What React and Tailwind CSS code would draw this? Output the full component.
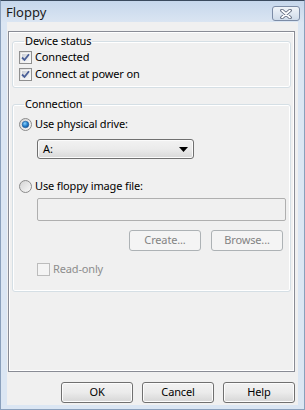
import React from "react";

const font = { fontFamily: '"Noto Sans", "Open Sans", sans-serif' };

function CheckBox({ checked, disabled }) {
  return (
    <span
      className={`relative inline-block w-[13px] h-[13px] shrink-0 border ${
        disabled ? "border-[#bcbcbc] bg-[#f4f4f4]" : "border-[#8f8f8f] bg-gradient-to-br from-[#dcdcdc] to-[#fbfbfb]"
      }`}
    >
      {!disabled && (
        <span className="absolute inset-[1px] border border-[#f4f4f4] bg-gradient-to-br from-[#cbcfd5] to-[#f6f6f6]" />
      )}
      {checked && (
        <svg className="absolute left-[1px] top-[1px]" width="9" height="9" viewBox="0 0 9 9">
          <path d="M1 4.5 L3.5 7 L8 1.2" fill="none" stroke="#4a5f97" strokeWidth="1.8" />
        </svg>
      )}
    </span>
  );
}

function Radio({ checked }) {
  return (
    <svg width="13" height="13" viewBox="0 0 13 13" className="shrink-0">
      <defs>
        <linearGradient id={checked ? "rg1" : "rg0"} x1="0" y1="0" x2="1" y2="1">
          <stop offset="0" stopColor="#d2d2d2" />
          <stop offset="1" stopColor="#fafafa" />
        </linearGradient>
        <radialGradient id="dot" cx="0.4" cy="0.35" r="0.7">
          <stop offset="0" stopColor="#8ad2ff" />
          <stop offset="0.6" stopColor="#1f7bc8" />
          <stop offset="1" stopColor="#1a4f8e" />
        </radialGradient>
      </defs>
      <circle cx="6.5" cy="6.5" r="6" fill={`url(#${checked ? "rg1" : "rg0"})`} stroke="#8b8b8b" strokeWidth="1" />
      {checked && <circle cx="6.5" cy="6.5" r="3.3" fill="url(#dot)" stroke="#1e5a9a" strokeWidth="0.6" />}
    </svg>
  );
}

function Btn({ children, disabled, w = "w-[72px]", h = "h-[21px]" }) {
  return (
    <div
      className={`${w} ${h} rounded-[3px] border flex items-center justify-center ${
        disabled
          ? "border-[#adb2b5] bg-[#f4f4f4] text-[#838383]"
          : "border-[#707070] bg-gradient-to-b from-[#f2f2f2] via-[#ebebeb] to-[#d6d6d6] text-black shadow-[inset_0_0_0_1px_#fcfcfc]"
      }`}
    >
      {children}
    </div>
  );
}

export default function App() {
  return (
    <div
      style={font}
      className="w-[305px] h-[410px] flex flex-col bg-[#dbe6f3] border-t border-t-[#3a4a5e] border-x border-x-[#8aa0bc] border-b border-b-[#8aa0bc] text-[11px] tracking-[-0.15px] text-black select-none"
    >
      {/* Title bar */}
      <div className="h-[21px] shrink-0 flex items-center justify-between pl-[5px] pr-[4px] bg-gradient-to-b from-[#c6d7ec] to-[#dae5f2]">
        <span className="text-[13px] tracking-normal text-[#1b1b1b] leading-none mt-[2px]">Floppy</span>
        <div className="w-[28px] h-[15px] mt-[4px] rounded-[3px] border border-[#7c8ca6] bg-gradient-to-b from-[#f0f4f9] to-[#cfdbe9] flex items-center justify-center">
          <svg width="14" height="10" viewBox="0 0 14 10">
            <path d="M3 1.5 L11 8.5 M11 1.5 L3 8.5" stroke="#5a6478" strokeWidth="3.6" strokeLinecap="round" />
            <path d="M3 1.5 L11 8.5 M11 1.5 L3 8.5" stroke="#ffffff" strokeWidth="1.8" strokeLinecap="round" />
          </svg>
        </div>
      </div>

      {/* Client area */}
      <div className="flex-1 mx-[6px] mb-[4px] bg-[#f0f0f0] flex flex-col">
        {/* Outer panel */}
        <div className="ml-[1px] mr-[3px] mt-[9px] h-[341px] border border-[#898c95] shadow-[inset_0_0_0_1px_#ffffff] px-[3px] pt-[1px] flex flex-col">
          <fieldset className="mt-0 border border-[#d5dfe5] rounded-[3px] shadow-[inset_0_0_0_1px_#fff] pl-[6px] pb-[5px] flex flex-col gap-[1px]">
            <legend className="ml-[5px] px-[1px] leading-[16px]">Device status</legend>
            <label className="flex items-center gap-[3px] h-[16px]">
              <CheckBox checked />
              <span>Connected</span>
            </label>
            <label className="flex items-center gap-[3px] h-[16px]">
              <CheckBox checked />
              <span>Connect at power on</span>
            </label>
          </fieldset>

          <fieldset className="mt-[8px] border border-[#d5dfe5] rounded-[3px] shadow-[inset_0_0_0_1px_#fff] pl-[6px] pr-[4px] pb-[14px] flex flex-col">
            <legend className="ml-[5px] px-[1px] leading-[16px]">Connection</legend>
            <label className="mt-[4px] flex items-center gap-[3px] h-[16px]">
              <Radio checked />
              <span>Use physical drive:</span>
            </label>
            <div className="mt-[7px] ml-[18px] w-[157px] h-[20px] rounded-[3px] border border-[#707070] bg-gradient-to-b from-[#f2f2f2] via-[#ebebeb] to-[#d8d8d8] shadow-[inset_0_0_0_1px_#fbfbfb] flex items-center justify-between pl-[5px] pr-[5px]">
              <span>A:</span>
              <svg width="9" height="5" viewBox="0 0 9 5">
                <path d="M0 0 H9 L4.5 5 Z" fill="#000" />
              </svg>
            </div>
            <label className="mt-[19px] flex items-center gap-[3px] h-[16px]">
              <Radio />
              <span>Use floppy image file:</span>
            </label>
            <div className="mt-[4px] ml-[18px] h-[23px] border border-[#afafaf] rounded-[2px] bg-[#f0f0f0]" />
            <div className="mt-[9px] flex justify-end gap-[10px] pr-[3px]">
              <Btn disabled>Create...</Btn>
              <Btn disabled>Browse...</Btn>
            </div>
            <label className="mt-[10px] ml-[18px] flex items-center gap-[3px] h-[16px] text-[#8d8d8d]">
              <CheckBox disabled />
              <span>Read-only</span>
            </label>
          </fieldset>
        </div>

        {/* Bottom buttons */}
        <div className="mt-[10px] mr-[3px] flex justify-end gap-[9px]">
          <Btn>OK</Btn>
          <Btn>Cancel</Btn>
          <Btn>Help</Btn>
        </div>
      </div>
    </div>
  );
}
